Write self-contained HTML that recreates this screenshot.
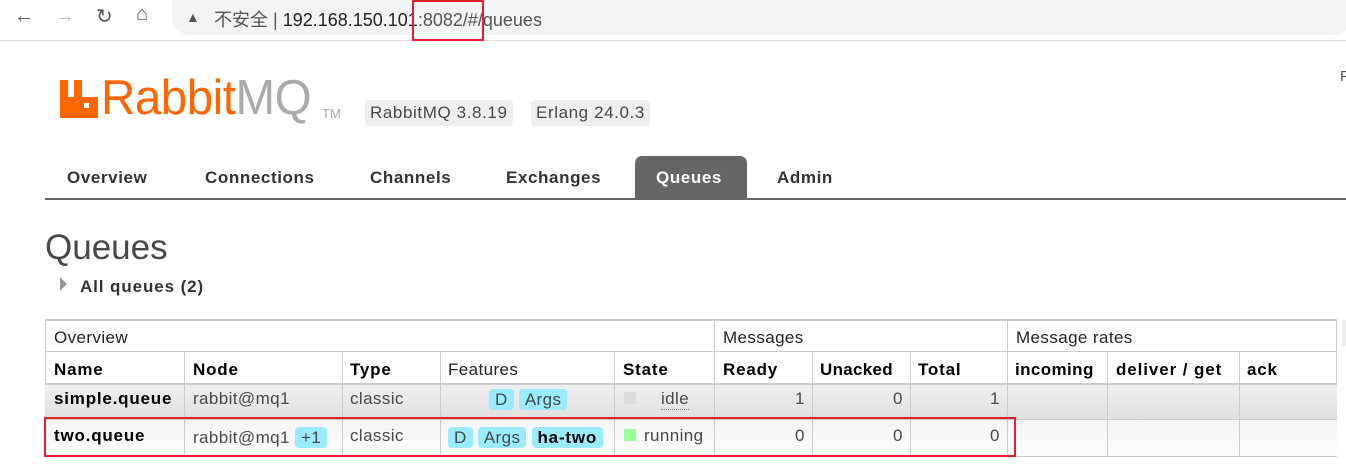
<!DOCTYPE html>
<html><head><meta charset="utf-8"><style>
*{margin:0;padding:0;box-sizing:border-box}
body{width:1346px;height:470px;overflow:hidden;background:#fff;font-family:"Liberation Sans","Noto Sans CJK SC",sans-serif;position:relative;color:#484848}
.a{position:absolute;white-space:nowrap}
.nav{font-weight:bold;font-size:17px;letter-spacing:.6px;color:#333;top:168px}
.th{font-weight:bold;font-size:17px;letter-spacing:.8px;color:#000}
.t{font-size:17px;letter-spacing:.4px}
.tag{background:#99ebff;border-radius:4px;padding:1px 6px;color:#484848}
</style></head><body>
<!-- browser bar -->
<div class="a" style="left:0;top:40px;width:1346px;height:1px;background:#ddd"></div>
<div class="a" style="left:172px;top:0;width:1180px;height:35px;background:#f1f3f4;border-radius:0 0 18px 18px"></div>
<div class="a" style="left:14px;top:5px;font-size:20px;color:#555">←</div>
<div class="a" style="left:55px;top:5px;font-size:20px;color:#bbb">→</div>
<div class="a" style="left:96px;top:4px;font-size:20px;color:#555">↻</div>
<div class="a" style="left:136px;top:3px;font-size:20px;color:#555">⌂</div>
<div class="a" style="left:186px;top:9px;font-size:14px;color:#555">▲</div>
<div class="a" style="left:214px;top:6px;font-size:18px;color:#555">不安全 | <span style="color:#222"> 192.168.150.101</span>:8082/#/queues</div>
<div class="a" style="left:412px;top:0;width:72px;height:41px;border:2px solid #e0202a"></div>
<div class="a" style="left:1340px;top:68px;font-size:15px;color:#555">F</div>
<!-- logo -->
<div class="a" style="left:60px;top:80px;width:8px;height:38px;background:#f60"></div>
<div class="a" style="left:60px;top:97px;width:38px;height:21px;background:#f60"></div>
<div class="a" style="left:74px;top:80px;width:8px;height:20px;background:#f60"></div>
<div class="a" style="left:84px;top:103px;width:5px;height:5px;background:#fff"></div>
<div class="a" style="left:101px;top:70px;font-size:49px;color:#f60;letter-spacing:-0.5px;transform:scaleX(0.97);transform-origin:left">Rabbit<span style="color:#aaa">MQ</span></div>
<div class="a" style="left:322px;top:106px;font-size:13px;color:#aaa">TM</div>
<div class="a" style="left:365px;top:100px;background:#eee;border-radius:4px;padding:3px 5px;font-size:17px;letter-spacing:.6px;color:#484848">RabbitMQ 3.8.19</div>
<div class="a" style="left:531px;top:100px;background:#eee;border-radius:4px;padding:3px 5px;font-size:17px;letter-spacing:.6px;color:#484848">Erlang 24.0.3</div>
<!-- nav -->
<div class="a" style="left:45px;top:198px;width:1301px;height:2px;background:#666"></div>
<div class="a" style="left:635px;top:156px;width:112px;height:43px;background:#666;border-radius:7px 7px 0 0"></div>
<div class="a nav" style="left:67px">Overview</div>
<div class="a nav" style="left:205px">Connections</div>
<div class="a nav" style="left:370px">Channels</div>
<div class="a nav" style="left:506px">Exchanges</div>
<div class="a nav" style="left:656px;color:#fff">Queues</div>
<div class="a nav" style="left:777px">Admin</div>
<div class="a" style="left:45px;top:228px;font-size:35px;color:#484848">Queues</div>
<div class="a" style="left:60px;top:277px;width:0;height:0;border-left:7px solid #999;border-top:7px solid transparent;border-bottom:7px solid transparent"></div>
<div class="a" style="left:80px;top:277px;font-size:17px;letter-spacing:.9px;font-weight:bold;color:#333">All queues (2)</div>
<!-- table -->
<div class="a" style="left:45px;top:319px;width:1292px;height:138px;border:1px solid #ccc;border-width:2px 1px 2px 1px"></div>
<div class="a" style="left:45px;top:383px;width:1292px;height:36px;background:linear-gradient(#f0f0f0,#e0e0e0)"></div>
<div class="a" style="left:45px;top:419px;width:1292px;height:37px;background:linear-gradient(#f4f4f4,#fcfcfc)"></div>
<div class="a" style="left:45px;top:351px;width:1292px;height:1px;background:#ccc"></div>
<div class="a" style="left:45px;top:383px;width:1292px;height:2px;background:#ccc"></div>
<div class="a" style="left:45px;top:419px;width:1292px;height:1px;background:#ccc"></div>
<div class="a" style="left:714px;top:320px;width:1px;height:136px;background:#ccc"></div>
<div class="a" style="left:1007px;top:320px;width:1px;height:136px;background:#ccc"></div>
<div class="a" style="left:184px;top:351px;width:1px;height:105px;background:#ccc"></div>
<div class="a" style="left:342px;top:351px;width:1px;height:105px;background:#ccc"></div>
<div class="a" style="left:440px;top:351px;width:1px;height:105px;background:#ccc"></div>
<div class="a" style="left:614px;top:351px;width:1px;height:105px;background:#ccc"></div>
<div class="a" style="left:812px;top:351px;width:1px;height:105px;background:#ccc"></div>
<div class="a" style="left:910px;top:351px;width:1px;height:105px;background:#ccc"></div>
<div class="a" style="left:1107px;top:351px;width:1px;height:105px;background:#ccc"></div>
<div class="a" style="left:1239px;top:351px;width:1px;height:105px;background:#ccc"></div>
<div class="a" style="left:1342px;top:320px;width:4px;height:26px;background:#eee"></div>
<div class="a t" style="left:54px;top:328px;color:#222">Overview</div>
<div class="a t" style="left:723px;top:328px;color:#222">Messages</div>
<div class="a t" style="left:1016px;top:328px;color:#222">Message rates</div>
<div class="a th" style="left:54px;top:360px">Name</div>
<div class="a th" style="left:193px;top:360px">Node</div>
<div class="a th" style="left:350px;top:360px">Type</div>
<div class="a t" style="left:448px;top:360px;color:#222">Features</div>
<div class="a th" style="left:623px;top:360px">State</div>
<div class="a th" style="left:723px;top:360px">Ready</div>
<div class="a th" style="left:820px;top:360px;letter-spacing:.3px">Unacked</div>
<div class="a th" style="left:918px;top:360px">Total</div>
<div class="a th" style="left:1015px;top:360px;letter-spacing:.4px">incoming</div>
<div class="a th" style="left:1116px;top:360px;letter-spacing:.9px">deliver / get</div>
<div class="a th" style="left:1247px;top:360px">ack</div>
<!-- row1 -->
<div class="a th" style="left:54px;top:389px">simple.queue</div>
<div class="a t" style="left:193px;top:389px">rabbit@mq1</div>
<div class="a t" style="left:350px;top:389px">classic</div>
<div class="a t" style="left:489px;top:390px"><span class="tag">D</span> <span class="tag">Args</span></div>
<div class="a" style="left:624px;top:392px;width:12px;height:12px;background:#ddd"></div>
<div class="a t" style="left:661px;top:389px;border-bottom:1px dotted #888">idle</div>
<div class="a t" style="left:795px;top:389px">1</div>
<div class="a t" style="left:893px;top:389px">0</div>
<div class="a t" style="left:990px;top:389px">1</div>
<!-- row2 -->
<div class="a th" style="left:54px;top:426px">two.queue</div>
<div class="a t" style="left:193px;top:428px">rabbit@mq1 <span class="tag">+1</span></div>
<div class="a t" style="left:350px;top:426px">classic</div>
<div class="a t" style="left:448px;top:428px"><span class="tag">D</span> <span class="tag">Args</span> <span class="tag" style="font-weight:bold;color:#000;letter-spacing:.8px">ha-two</span></div>
<div class="a" style="left:624px;top:429px;width:12px;height:12px;background:#9f9"></div>
<div class="a t" style="left:644px;top:426px">running</div>
<div class="a t" style="left:795px;top:426px">0</div>
<div class="a t" style="left:893px;top:426px">0</div>
<div class="a t" style="left:990px;top:426px">0</div>
<div class="a" style="left:44px;top:417px;width:972px;height:40px;border:2px solid #e0202a"></div>
</body></html>
